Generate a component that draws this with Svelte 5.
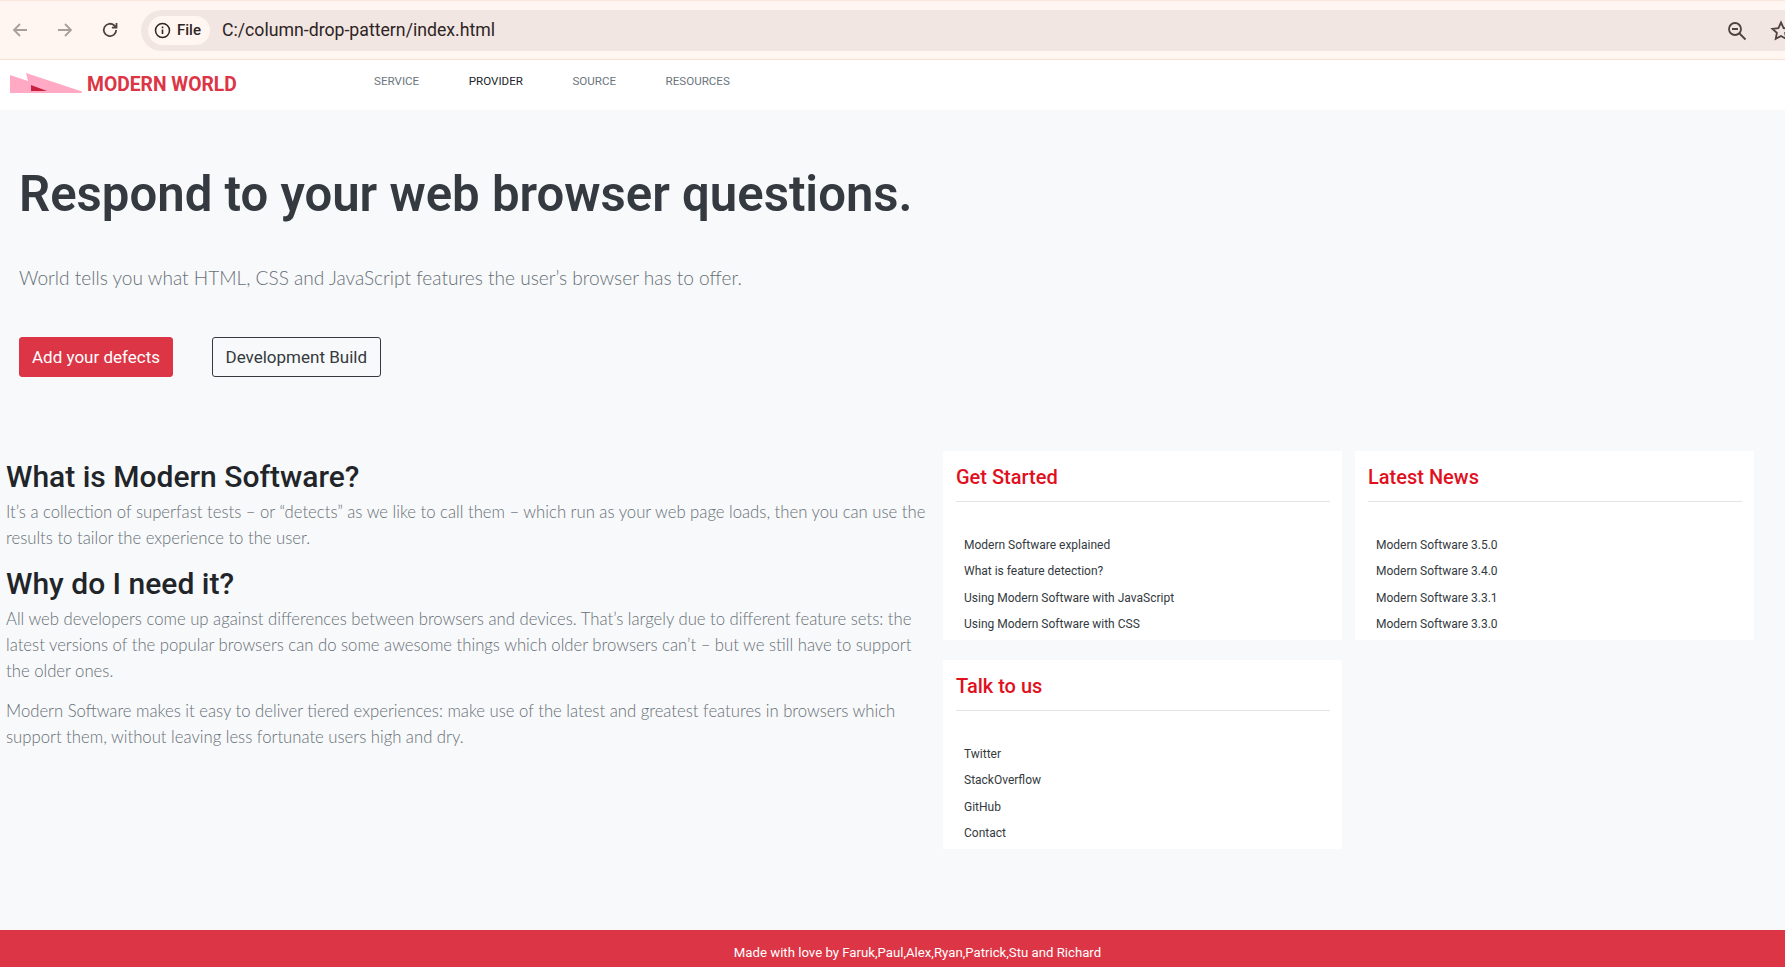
<script>
  const navItems = [
    { text: "SERVICE", active: false },
    { text: "PROVIDER", active: true },
    { text: "SOURCE", active: false },
    { text: "RESOURCES", active: false }
  ];

  const cards = [
    { title: "Get Started", links: ["Modern Software explained", "What is feature detection?", "Using Modern Software with JavaScript", "Using Modern Software with CSS"] },
    { title: "Latest News", links: ["Modern Software 3.5.0", "Modern Software 3.4.0", "Modern Software 3.3.1", "Modern Software 3.3.0"] },
    { title: "Talk to us", links: ["Twitter", "StackOverflow", "GitHub", "Contact"] }
  ];
</script>

<div class="page">
  <header class="chrome">
    <svg class="btn" width="22" height="22" viewBox="0 0 22 22"><path d="M18 11H5M11 5l-6 6 6 6" fill="none" stroke="#a89f9b" stroke-width="1.8"/></svg>
    <svg class="btn" width="22" height="22" viewBox="0 0 22 22"><path d="M4 11h13M11 5l6 6-6 6" fill="none" stroke="#a89f9b" stroke-width="1.8"/></svg>
    <svg class="btn" width="22" height="22" viewBox="0 0 22 22"><path d="M17.2 11a6.2 6.2 0 1 1-1.9-4.5L17.5 8.6M17.5 4v4.6h-4.6" fill="none" stroke="#4e4340" stroke-width="1.8"/></svg>
    <div class="omnibox">
      <div class="chip">
        <svg width="17" height="17" viewBox="0 0 17 17"><circle cx="8.5" cy="8.5" r="7" fill="none" stroke="#2c2523" stroke-width="1.5"/><path d="M8.5 7.5v4.5M8.5 4.6v1.6" stroke="#2c2523" stroke-width="1.6"/></svg>
        <span>File</span>
      </div>
      <span class="url">C:/column-drop-pattern/index.html</span>
      <svg class="zoom" width="22" height="22" viewBox="0 0 22 22"><circle cx="9" cy="9" r="6" fill="none" stroke="#4e4340" stroke-width="1.8"/><path d="M6 9h6M13.5 13.5l6 6" stroke="#4e4340" stroke-width="1.8"/></svg>
      <svg class="star" width="22" height="22" viewBox="0 0 22 22"><path d="M11 2.5l2.6 5.6 6 .7-4.5 4.1 1.2 6L11 16l-5.3 2.9 1.2-6-4.5-4.1 6-.7z" fill="none" stroke="#4e4340" stroke-width="1.8"/></svg>
    </div>
  </header>

  <nav class="navbar">
    <div class="brand">
      <svg width="72" height="20" viewBox="0 0 72 20"><path d="M0 2l18 6L16 0l56 18.500V20H0z" fill="#ffa9c4"/><path d="M21 12l16 6H21z" fill="#c9203f"/></svg>
      <span>MODERN WORLD</span>
    </div>
    <ul>
      {#each navItems as item}
        <li class:active={item.active}>{item.text}</li>
      {/each}
    </ul>
  </nav>

  <section class="hero">
    <h1>Respond to your web browser questions.</h1>
    <p>World tells you what HTML, CSS and JavaScript features the user’s browser has to offer.</p>
    <div class="actions">
      <a class="primary">Add your defects</a>
      <a class="outline">Development Build</a>
    </div>
  </section>

  <main class="columns">
    <article class="intro">
      <h2>What is Modern Software?</h2>
      <p>It’s a collection of superfast tests – or “detects” as we like to call them – which run as your web page loads, then you can use the results to tailor the experience to the user.</p>
      <h2>Why do I need it?</h2>
      <p>All web developers come up against differences between browsers and devices. That’s largely due to different feature sets: the latest versions of the popular browsers can do some awesome things which older browsers can’t – but we still have to support the older ones.</p>
      <p>Modern Software makes it easy to deliver tiered experiences: make use of the latest and greatest features in browsers which support them, without leaving less fortunate users high and dry.</p>
    </article>
    <div class="cards">
      {#each cards as card}
        <div class="card">
          <h3>{card.title}</h3>
          <ul>
            {#each card.links as link}
              <li>{link}</li>
            {/each}
          </ul>
        </div>
      {/each}
    </div>
  </main>

  <footer>Made with love by Faruk,Paul,Alex,Ryan,Patrick,Stu and Richard</footer>
</div>

<style>
  :global(body) {
    margin: 0;
    background: #f8f9fa;
    overflow: hidden;
  }

  .page {
    height: 967px;
    display: flex;
    flex-direction: column;
    font-family: "Roboto", "Liberation Sans", sans-serif;
    color: #212529;
    background: #f8f9fa;
    overflow: hidden;
  }

  .chrome {
    height: 58px;
    flex: none;
    display: flex;
    align-items: center;
    padding-left: 9px;
    gap: 23px;
    background: #fff6f2;
    border-top: 1px solid #fbe6dc;
    border-bottom: 2px solid #f6dfd4;
    box-sizing: content-box;
    margin-bottom: -1px;
  }

  .omnibox {
    flex: 1;
    height: 41px;
    margin-left: -3px;
    margin-right: -20px;
    border-radius: 21px 0 0 21px;
    background: #f2e6e3;
    display: flex;
    align-items: center;
    padding-left: 7px;
    position: relative;
  }

  .chip {
    height: 29px;
    width: 56px;
    padding-left: 6px;
    border-radius: 15px;
    background: #fff6f2;
    display: flex;
    align-items: center;
    gap: 6px;
    font-size: 15px;
    color: #2c2523;
    font-weight: 500;
  }

  .url {
    margin-left: 12px;
    font-size: 17.7px;
    color: #2c2523;
  }

  .zoom {
    position: absolute;
    right: 57px;
    top: 10px;
  }

  .star {
    position: absolute;
    right: 13px;
    top: 10px;
  }

  .navbar {
    height: 50px;
    flex: none;
    background: #fff;
    display: flex;
    align-items: center;
    padding-left: 10px;
  }

  .brand {
    width: 364px;
    display: flex;
    align-items: flex-end;
    gap: 5px;
    font-size: 19.3px;
    font-weight: 700;
    color: #dc3545;
    height: 22px;
    margin-top: -6px;
  }

  .brand span {
    line-height: 24px;
    margin-bottom: -4px;
  }

  .navbar ul {
    display: flex;
    gap: 49.500px;
    list-style: none;
    margin: -8px 0 0;
    padding: 0;
    font-size: 11.6px;
    color: #6c757d;
  }

  .navbar li.active {
    color: #212529;
  }

  .hero {
    height: 341px;
    flex: none;
    padding: 56px 19px 0;
    box-sizing: border-box;
  }

  h1 {
    margin: 0;
    font-size: 49.1px;
    line-height: 57px;
    font-weight: 600;
    color: #343a40;
  }

  .hero p {
    margin: 40px 0 0;
    font-family: "Lato", "Liberation Sans", sans-serif;
    font-size: 19.1px;
    line-height: 30px;
    font-weight: 300;
    color: #666f77;
  }

  .actions {
    display: flex;
    gap: 39px;
    margin-top: 44px;
  }

  .actions a {
    height: 40px;
    box-sizing: border-box;
    display: flex;
    align-items: center;
    padding: 0 12.500px;
    border-radius: 3px;
    font-size: 17px;
    border: 1px solid #343a40;
    color: #343a40;
  }

  .actions a.primary {
    padding: 0 12px;
    background: #dc3545;
    border-color: #dc3545;
    color: #fff;
  }

  .columns {
    flex: 1;
    display: flex;
    min-height: 0;
  }

  .intro {
    width: 943px;
    flex: none;
    padding: 7px 12px 0 6px;
    box-sizing: border-box;
  }

  h2 {
    margin: 0 0 4px;
    font-size: 30px;
    line-height: 37px;
    font-weight: 500;
    color: #212529;
  }

  .intro p {
    margin: 0 0 14px;
    font-family: "Lato", "Liberation Sans", sans-serif;
    font-size: 16.7px;
    line-height: 26px;
    font-weight: 300;
    color: #666f77;
  }

  .cards {
    flex: 1;
    display: grid;
    grid-template-columns: 399px 399px;
    grid-auto-rows: 189px;
    column-gap: 13px;
    row-gap: 20px;
  }

  .card {
    background: #fff;
    padding: 13px 12px 0 13px;
    box-sizing: border-box;
    overflow: hidden;
  }

  h3 {
    margin: 0;
    padding-bottom: 11px;
    font-size: 20px;
    line-height: 26px;
    font-weight: 500;
    color: #e0101e;
    border-bottom: 1px solid #e3e4e6;
  }

  .card ul {
    list-style: none;
    margin: 30px 0 0;
    padding: 0 0 0 8px;
    font-size: 12px;
    line-height: 26.300px;
    color: #343a40;
  }

  footer {
    height: 37px;
    flex: none;
    background: #dc3545;
    color: #fff;
    font-size: 13.2px;
    padding: 8px 0 0 50px;
    box-sizing: border-box;
    text-align: center;
    line-height: 30px;
  }
</style>
